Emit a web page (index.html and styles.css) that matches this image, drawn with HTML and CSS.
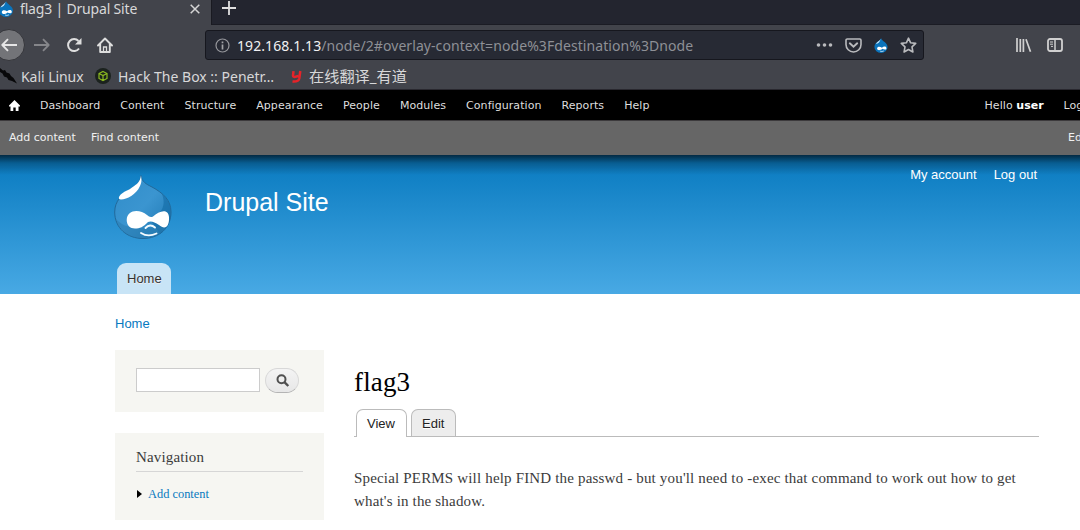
FILE: index.html
```html
<!DOCTYPE html>
<html lang="en">
<head>
<meta charset="utf-8">
<title>flag3 | Drupal Site</title>
<link rel="stylesheet" href="styles.css">
</head>
<body>
<svg width="0" height="0" class="defs">
  <symbol id="drop" viewBox="0 0 14 16">
    <path d="M7 0C7 3 0 4 0 9.5A7 6.5 0 0 0 14 9.5C14 5 8 3.500 7 0Z" fill="#0a73bb"/>
    <path d="M6.500 1C5.500 3.500 2.500 4 1.500 6.500C4 6 6 4 6.500 1Z" fill="#d9edf8"/>
    <path d="M2.800 11C3 8.800 6 8.800 8 10.300C10 8.500 12.800 8.800 12.800 10.800C12.800 13 10 12.500 8.500 11.500C6 13.800 2.800 13.500 2.800 11Z" fill="#fff"/>
    <path d="M6 14Q8 15 10 13.800" stroke="#d9edf8" stroke-width=".8" fill="none"/>
  </symbol>
</svg>

<div class="browser">
  <div class="tabstrip">
    <div class="tab">
      <svg class="tab-icon" width="14" height="16"><use href="#drop"/></svg>
      <span class="tab-title">flag3 | Drupal Site</span>
      <svg class="tab-close" width="10" height="10" viewBox="0 0 10 10"><path d="M.7.7l8.600 8.600M9.300.7L.7 9.300" stroke="#d6d6d6" stroke-width="1.500"/></svg>
    </div>
    <svg class="new-tab" width="14" height="14" viewBox="0 0 14 14"><path d="M7 0v14M0 7h14" stroke="#e0e0e0" stroke-width="1.800"/></svg>
  </div>

  <div class="navbar">
    <span class="back"><svg width="16" height="14" viewBox="0 0 16 14"><path d="M16 7H1.500M7 1.200L1.300 7L7 12.800" fill="none" stroke="#e6e6e6" stroke-width="1.900" stroke-linejoin="round"/></svg></span>
    <svg class="forward" width="16" height="14" viewBox="0 0 16 14"><path d="M0 7h14.500M9 1.200L14.700 7L9 12.800" fill="none" stroke="#85868a" stroke-width="1.800" stroke-linejoin="round"/></svg>
    <svg class="reload" width="16" height="16" viewBox="0 0 16 16"><path d="M12.500 4A6 6 0 1 0 13 11.500" fill="none" stroke="#dedede" stroke-width="2"/><path d="M15.500 1v6.500H9Z" fill="#dedede"/></svg>
    <svg class="home" width="16" height="16" viewBox="0 0 16 16"><path d="M1 8.500L8 1.500L15 8.500M3.200 7v8h9.600V7" fill="none" stroke="#dedede" stroke-width="1.900" stroke-linejoin="round" stroke-linecap="round"/><path d="M6.500 15v-5h3v5" fill="none" stroke="#dedede" stroke-width="1.300"/></svg>
    <div class="urlbar">
      <svg width="15" height="15" viewBox="0 0 15 15"><circle cx="7.500" cy="7.500" r="6.500" fill="none" stroke="#96979c" stroke-width="1.200"/><path d="M7.500 6.500v5M7.500 3.500v1.700" stroke="#a2a3a7" stroke-width="1.700"/></svg>
      <span class="url"><b>192.168.1.13</b>/node/2#overlay-context=node%3Fdestination%3Dnode</span>
      <span class="url-actions">
        <svg width="17" height="4" viewBox="0 0 17 4"><g fill="#b9babd"><circle cx="2.500" cy="2" r="1.800"/><circle cx="8.500" cy="2" r="1.800"/><circle cx="14.500" cy="2" r="1.800"/></g></svg>
        <svg width="17" height="15" viewBox="0 0 17 15"><path d="M2.200 1h12.600a1.200 1.200 0 0 1 1.200 1.200v4.300a7.500 7.500 0 0 1-15 0V2.200A1.200 1.200 0 0 1 2.200 1Z" fill="none" stroke="#b9babd" stroke-width="1.600"/><path d="M4.800 5.300L8.500 8.800L12.200 5.300" fill="none" stroke="#b9babd" stroke-width="1.900" stroke-linecap="round"/></svg>
        <svg width="14" height="15"><use href="#drop"/></svg>
        <svg width="17" height="16" viewBox="0 0 17 16"><path d="M8.500 1.200L10.600 5.800L15.700 6.400L12 9.900L12.900 15L8.500 12.500L4.100 15L5 9.900L1.300 6.400L6.400 5.800Z" fill="none" stroke="#b9babd" stroke-width="1.600" stroke-linejoin="round"/></svg>
      </span>
    </div>
    <svg class="library" width="16" height="14" viewBox="0 0 16 14"><path d="M1 0v14M4.300 1v13M7.400 1v13M10 1.200L14.500 13.700" stroke="#d0d0d0" stroke-width="1.700"/></svg>
    <svg class="sidebar-icon" width="16" height="14" viewBox="0 0 16 14"><rect x="1" y="1" width="14" height="12" rx="2" fill="none" stroke="#d0d0d0" stroke-width="1.800"/><path d="M8 1v12" stroke="#d0d0d0" stroke-width="1.500"/><path d="M3 4h3M3 6.200h3M4 8.400h2" stroke="#d0d0d0"/></svg>
  </div>

  <div class="bookmarks">
    <svg class="kali" width="17" height="16" viewBox="0 0 17 16"><path d="M0 0L3 2.500L5 2L6.500 4.500L9.500 5.500L11 8L13.500 10L17 15.500L12 13L8.500 12L7 9.500L4 8.500L2.500 5.500L0 4Z" fill="#08080a"/></svg>
    <span class="bm-kali">Kali Linux</span>
    <svg class="htb" width="16" height="16" viewBox="0 0 16 16"><circle cx="8" cy="8" r="8" fill="#1b221e"/><path d="M8 3.500L12 5.500V10.500L8 12.500L4 10.500V5.500ZM4 5.500L8 7.500L12 5.500M8 7.500V12.500" fill="none" stroke="#8dbb20" stroke-width="1.200"/></svg>
    <span class="bm-htb">Hack The Box :: Penetr…</span>
    <svg class="youdao" width="11" height="13" viewBox="0 0 11 13"><path d="M2.500 1.200L2 5.500Q2 7.300 4.500 6.800L7.500 6M9.300 1L8.300 8.500Q7.500 12 1.500 11.500" fill="none" stroke="#e52329" stroke-width="2.500"/></svg>
    <span class="bm-youdao">在线翻译_有道</span>
  </div>
</div>

<div class="admin-menu">
  <svg class="admin-home" width="11" height="11" viewBox="0 0 11 11"><path d="M5.500 0L11 5.500V6.500H9.500V11H6.700V7.500H4.300V11H1.500V6.500H0V5.500Z" fill="#fff"/></svg>
  <span>Dashboard</span><span>Content</span><span>Structure</span><span>Appearance</span><span>People</span><span>Modules</span><span>Configuration</span><span>Reports</span><span>Help</span>
  <span class="hello">Hello <b>user</b></span><span class="cut">Log out</span>
</div>
<div class="shortcuts"><span>Add content</span><span>Find content</span><span class="edit-link">Edit shortcuts</span></div>

<header class="header">
  <div class="brand">
    <svg class="logo" width="58" height="66" viewBox="0 0 58 66">
      <defs>
        <linearGradient id="body" x1="0" y1="0" x2="1" y2="1"><stop offset="0" stop-color="#2f8cc9"/><stop offset=".5" stop-color="#3b95d0"/><stop offset="1" stop-color="#1c75b0"/></linearGradient>
      </defs>
      <path d="M27 .5C28 7 32 9 38 12C49 18 57 25 57 37C57 53 45 63.500 29 63.500C13 63.500 .7 53 .7 37C.7 26 8 19 17 14C23 10 26 8 27 .5Z" fill="url(#body)" stroke="#22699a" stroke-width="1"/>
      <path d="M48 19C54 24 56.500 30 56.500 37C56.500 47 53 54 46 59L36 44C46 40 53 32 48 19Z" fill="#126ba5" opacity=".6"/>
      <path d="M2 44C7 50 14 52 22 53C34 54 44 52 54 50C49 59 39 63 29 63C15 63 5 56 2 44Z" fill="#2879ae" opacity=".5"/>
      <path d="M27 .5C27.500 5 28 7 26 11C22 20 13 24 7 24.500C4 24.500 4 21.500 8 18.500C11 16 15 15 18 12.500C23 9 26 7 27 .5Z" fill="#fff"/>
      <path d="M12.700 45C13 34 26 34 33 40Q36 43 39 41.500C45 36 54 33 55 42C55.500 52 51 55 45 50Q38 45 34 47C29 52 26 53.500 21 53.500C16 53.500 12.700 50 12.700 45Z" fill="#fff"/>
      <path d="M31.500 53Q36 48 41 52.500M27 58Q34 62.500 42.500 58.500" fill="none" stroke="#f4fbff" stroke-width="1.900" stroke-linecap="round"/>
    </svg>
    <h1 class="site-name">Drupal Site</h1>
    <nav class="account"><a>My account</a><a>Log out</a></nav>
  </div>
  <div class="main-tab">Home</div>
</header>

<div class="page">
  <div class="breadcrumb">Home</div>
  <div class="columns">
    <aside class="sidebar">
      <div class="block search">
        <div class="field"></div>
        <div class="search-button"><svg width="14" height="14" viewBox="0 0 14 14"><circle cx="5.500" cy="5.300" r="4" fill="none" stroke="#505050" stroke-width="2"/><path d="M8.400 8.200L12.300 12" stroke="#505050" stroke-width="2.400"/></svg></div>
      </div>
      <div class="block navigation">
        <h2>Navigation</h2>
        <div class="leaf"><svg width="5" height="8" viewBox="0 0 5 8"><path d="M0 0L5 4L0 8Z"/></svg><a>Add content</a></div>
      </div>
    </aside>
    <main class="content">
      <h1>flag3</h1>
      <div class="tabs"><span class="view active">View</span><span class="edit">Edit</span></div>
      <p><span class="line1">Special PERMS will help FIND the passwd - but you'll need to -exec that command to work out how to get</span><br><span class="line2">what's in the shadow.</span></p>
    </main>
  </div>
</div>
</body>
</html>
```
FILE: styles.css
```css
* { box-sizing: border-box; }
body { margin: 0; width: 1080px; height: 530px; overflow: hidden; background: #fff; font-family: "Liberation Sans", Arial, sans-serif; white-space: nowrap; }
svg { display: block; flex: none; }
.defs { position: absolute; }
h1, h2, p { margin: 0; font-weight: normal; }

.browser { height: 90px; background: #42444b; border-bottom: 1px solid #29282f; color: #d8d8d9; font-family: "Noto Sans", "Noto Sans CJK SC", sans-serif; font-size: 14px; }
.tabstrip { display: flex; height: 25px; background: #23252f; border-bottom: 1px solid #1b1c24; }
.tab { display: flex; width: 212px; height: 25px; background: #42444b; border-right: 1px solid #191a21; }
.tab-icon { margin-left: -1px; margin-top: 1px; }
.tab-title { margin-left: 7px; width: 170px; line-height: 18px; letter-spacing: -.18px; }
.tab-close { margin-top: 4px; }
.new-tab { margin: 1px 0 0 10px; }

.navbar { display: flex; align-items: center; height: 40px; }
.back { display: flex; align-items: center; width: 32px; height: 32px; margin-left: -7px; padding-left: 7px; border-radius: 50%; background: #737478; border: 1px solid #35363b; }
.forward { margin-left: 9px; }
.reload { margin-left: 16px; }
.home { margin-left: 15px; }
.urlbar { display: flex; align-items: center; width: 719px; height: 30px; margin-left: 92px; padding: 0 6px 0 9px; background: #272a34; border: 1px solid #16171e; border-radius: 3px; }
.url { margin-left: 7px; color: #8e9096; letter-spacing: .075px; }
.url b { color: #f1f1f2; font-weight: normal; }
.url-actions { display: flex; align-items: center; gap: 12px; margin-left: auto; }
.library { margin-left: 92px; }
.sidebar-icon { margin-left: 15px; }

.bookmarks { display: flex; align-items: center; height: 22px; }
.bm-kali { margin-left: 4px; width: 63px; letter-spacing: -.05px; }
.htb { margin-left: 11px; }
.bm-htb { margin-left: 7px; width: 156px; }
.youdao { margin-left: 17px; }
.bm-youdao { margin-left: 7px; font-size: 15.200px; line-height: 18px; padding-bottom: 1px; }

.admin-menu { display: flex; align-items: center; gap: 20px; height: 31px; padding-left: 9px; background: #000; border-bottom: 1px solid #3c3a3c; color: #dedede; font: 11px "DejaVu Sans", sans-serif; letter-spacing: .065px; overflow: hidden; }
.admin-menu span { flex: none; }
.admin-menu .hello { width: 59px; margin-left: 315px; }
.hello b { color: #fff; }
.shortcuts { display: flex; align-items: center; gap: 15px; height: 34px; padding: 0 0 2px 9px; background: #666; color: #f0f0f0; font: 11px "DejaVu Sans", sans-serif; overflow: hidden; }
.shortcuts span { flex: none; }
.shortcuts .edit-link { margin-left: 894px; }

.header { height: 139px; background: linear-gradient(rgba(0,0,0,.65), rgba(0,0,0,.25) 8px, rgba(0,0,0,0) 20px), linear-gradient(#0779bf, #48a9e4); color: #fff; }
.brand { display: flex; height: 108px; padding: 20px 43px 0 114px; }
.site-name { margin-left: 33px; padding-top: 13px; font-size: 25px; line-height: 29px; }
.account { display: flex; gap: 17px; margin: -8px 0 0 auto; font-size: 13px; line-height: 16px; }
.main-tab { width: 54px; height: 31px; margin-left: 117px; padding-left: 10px; background: #c8e4f6; border-radius: 9px 9px 0 0; color: #333; font-size: 13px; line-height: 32px; text-shadow: 0 1px #eee; }

.page { padding: 22px 0 0 115px; }
.breadcrumb { height: 34px; color: #0779bf; font-size: 13px; line-height: 16px; }
.columns { display: flex; gap: 30px; }
.sidebar { width: 209px; }
.block { background: #f6f6f2; }
.search { display: flex; gap: 5px; height: 62px; padding: 18px 0 0 21px; }
.field { width: 124px; height: 24px; border: 1px solid #ccc; background: #fff; }
.search-button { width: 34px; height: 25px; padding: 5px 0 0 10px; border: 1px solid #d8d8d8; border-bottom-color: #b4b4b4; border-radius: 13px; background: linear-gradient(#f4f4f4, #e7e7e7); }
.navigation { height: 87px; margin-top: 21px; padding: 15px 21px 0; font-family: "Liberation Serif", serif; }
.navigation h2 { height: 24px; border-bottom: 1px solid #d6d6d6; color: #3b3b3b; font-size: 15px; line-height: 19px; letter-spacing: .15px; }
.leaf { display: flex; align-items: center; gap: 6px; margin-top: 14px; padding-left: 1px; font-size: 12.400px; line-height: 16px; }
.leaf a { color: #0779bf; }
.content { width: 685px; padding-top: 15px; font-family: "Liberation Serif", serif; color: #3b3b3b; }
.content h1 { color: #000; font-size: 27px; line-height: 34px; letter-spacing: .15px; }
.tabs { display: flex; gap: 4px; height: 38px; padding: 10px 0 0 2px; border-bottom: 1px solid #bbb; font: 13px/27px "Liberation Sans", sans-serif; color: #222; }
.tabs span { height: 27px; border: 1px solid #bbb; border-bottom: 0; border-radius: 7px 7px 0 0; background: #ededed; text-shadow: 0 1px #fff; padding-left: 10px; }
.tabs .view { width: 51px; height: 28px; background: #fff; }
.tabs .edit { width: 45px; }
.content p { margin-top: 30px; font-size: 15px; line-height: 23px; }
.line1, .line2 { letter-spacing: .173px; }
```
